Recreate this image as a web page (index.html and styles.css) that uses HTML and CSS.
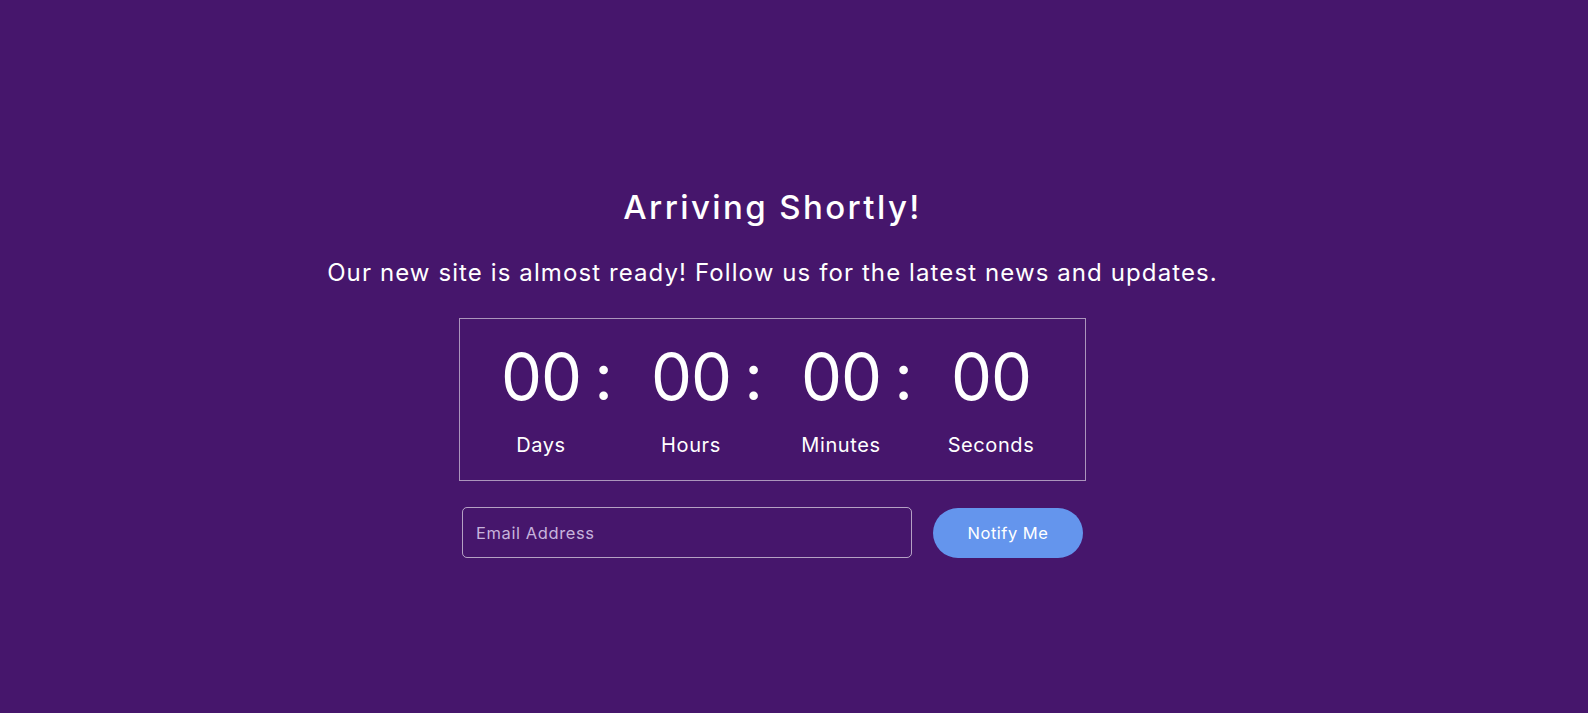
FILE: index.html
```html
<!DOCTYPE html>
<html lang="en">
<head>
<meta charset="utf-8">
<title>Arriving Shortly!</title>
<link rel="stylesheet" href="styles.css">
</head>
<body>
<main class="page">
  <h1 class="title">Arriving Shortly!</h1>
  <p class="subtitle">Our new site is almost ready! Follow us for the latest news and updates.</p>
  <div class="countdown">
    <div class="unit with-colon"><span class="num">00</span><span class="label">Days</span></div>
    <div class="unit with-colon"><span class="num">00</span><span class="label">Hours</span></div>
    <div class="unit with-colon"><span class="num">00</span><span class="label">Minutes</span></div>
    <div class="unit"><span class="num">00</span><span class="label">Seconds</span></div>
  </div>
  <form class="notify" onsubmit="return false">
    <input class="email" type="email" placeholder="Email Address">
    <button class="btn" type="submit">Notify Me</button>
  </form>
</main>
</body>
</html>
```

FILE: styles.css
```css
* { box-sizing: border-box; }
html, body {
  margin: 0;
  height: 100%;
  background: #46166c;
}
body {
  font-family: Inter, "Open Sans", "Liberation Sans", sans-serif;
  color: #ffffff;
  overflow: hidden;
}
.page {
  width: 1545px;
  display: flex;
  flex-direction: column;
  align-items: center;
  padding-top: 188px;
}
.title {
  margin: 0;
  font-size: 33px;
  line-height: 38px;
  font-weight: 500;
  letter-spacing: 2.4px;
}
.subtitle {
  margin: 33px 0 0;
  font-size: 24px;
  line-height: 28px;
  font-weight: 400;
  letter-spacing: 1.1px;
}
.countdown {
  margin-top: 31px;
  width: 627px;
  height: 163px;
  border: 1px solid rgba(255, 255, 255, 0.55);
  display: flex;
  padding: 25px 19px 0 6px;
}
.unit {
  position: relative;
  width: 150px;
  display: flex;
  flex-direction: column;
  align-items: center;
}
.num {
  font-size: 65px;
  line-height: 65px;
  font-weight: 400;
  letter-spacing: -1px;
}
.with-colon::after {
  content: ":";
  position: absolute;
  right: 3px;
  top: 0;
  font-size: 65px;
  line-height: 65px;
  font-weight: 400;
}
.label {
  margin-top: 24px;
  font-size: 20px;
  line-height: 24px;
  letter-spacing: 0.6px;
}
.notify {
  margin-top: 26px;
  display: flex;
  align-items: center;
  gap: 21px;
}
.email {
  width: 450px;
  height: 51px;
  border: 1px solid rgba(255, 255, 255, 0.6);
  border-radius: 5px;
  background: transparent;
  color: #ffffff;
  padding: 0 13px;
  font-family: inherit;
  font-size: 16.5px;
  letter-spacing: 0.6px;
  outline: none;
}
.email::placeholder {
  color: #c7b3dc;
  opacity: 1;
}
.btn {
  width: 150px;
  height: 50px;
  border: none;
  border-radius: 25px;
  background: #6495ed;
  color: #ffffff;
  font-family: inherit;
  font-size: 16.5px;
  font-weight: 400;
  letter-spacing: 0.5px;
  cursor: pointer;
}
```
